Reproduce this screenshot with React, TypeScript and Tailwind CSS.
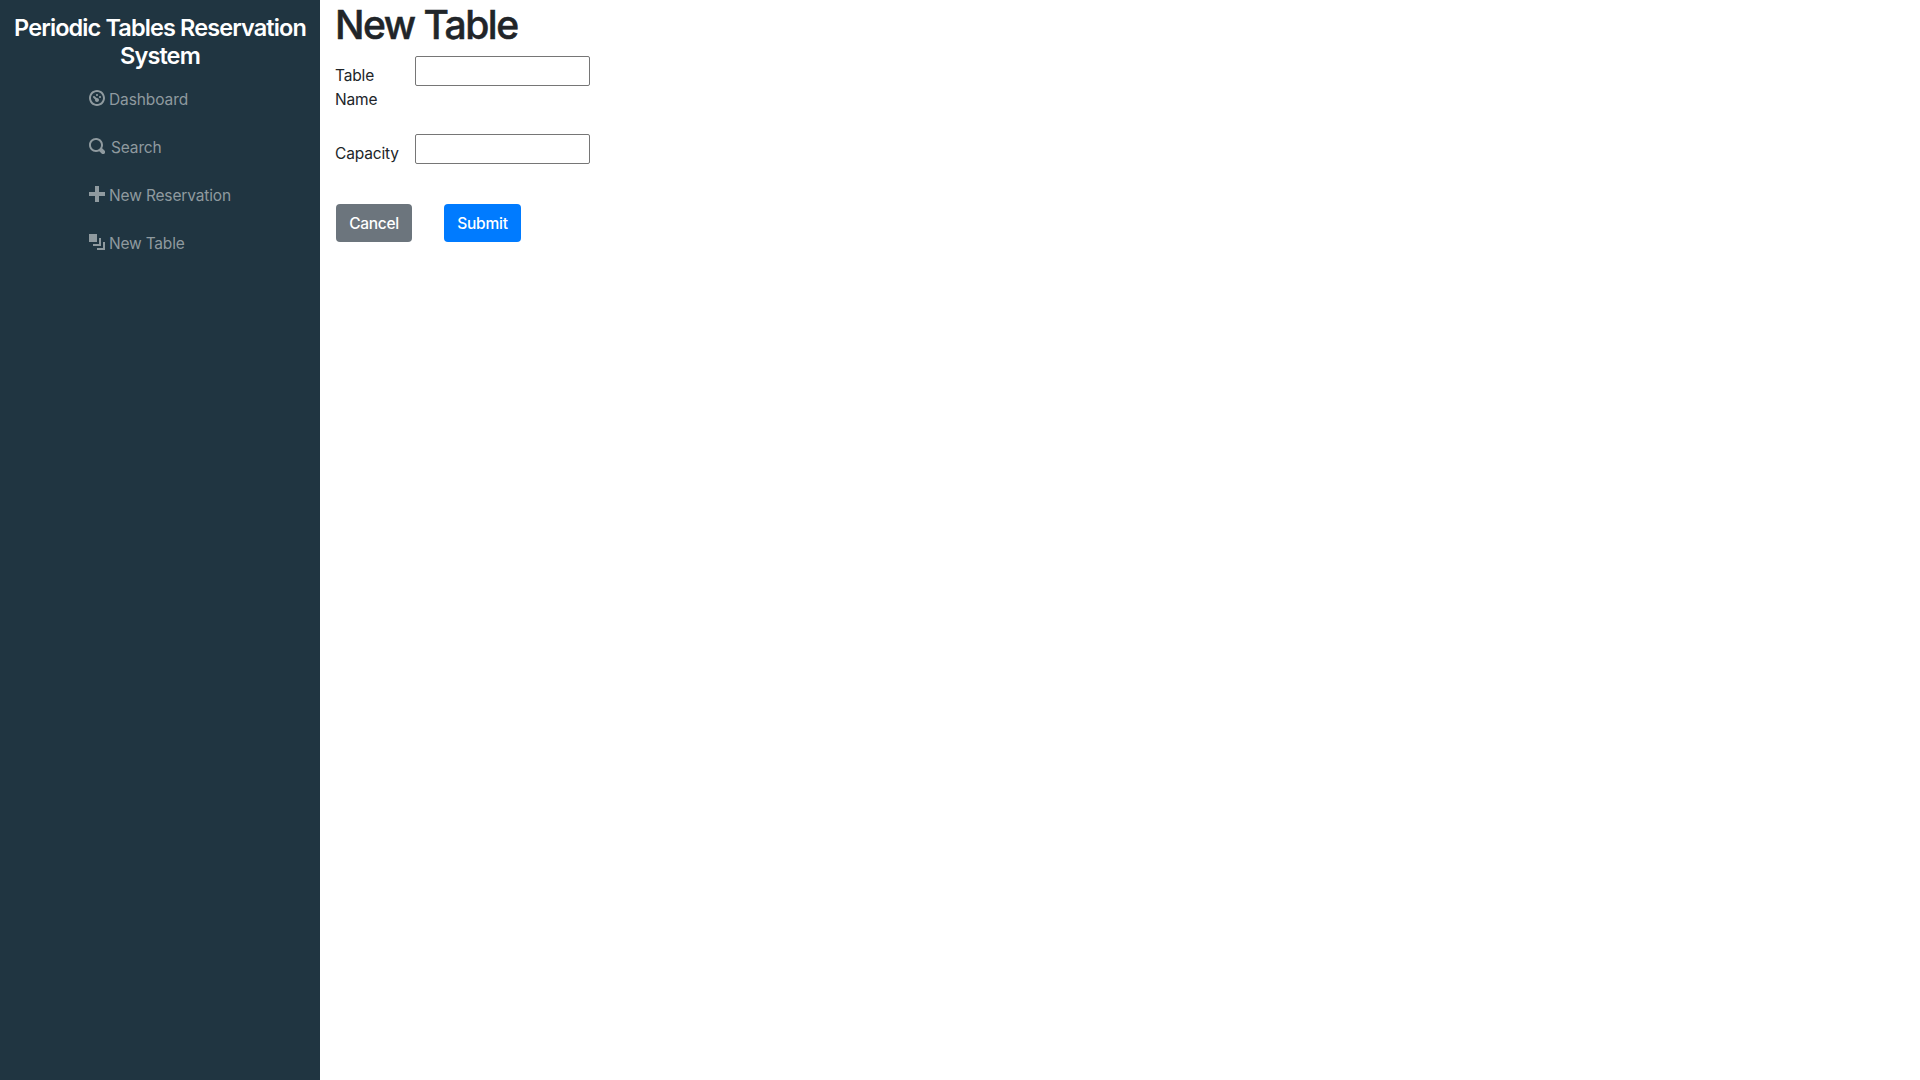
const icons = {
  dashboard:
    "M4 0c-2.2 0-4 1.8-4 4s1.8 4 4 4 4-1.8 4-4-1.8-4-4-4zm0 1c1.66 0 3 1.34 3 3s-1.34 3-3 3-3-1.34-3-3 1.34-3 3-3zm0 1c-.28 0-.5.22-.5.5s.22.5.5.5.5-.22.5-.5-.22-.5-.5-.5zm-1.66 1a.5.5 0 0 0-.19.84l.91.91c-.02.08-.06.16-.06.25 0 .55.45 1 1 1s1-.45 1-1-.45-1-1-1c-.09 0-.17.04-.25.06l-.91-.91a.5.5 0 0 0-.44-.16.5.5 0 0 0-.06 0zm3.16 0c-.28 0-.5.22-.5.5s.22.5.5.5.5-.22.5-.5-.22-.5-.5-.5z",
  search:
    "M3.5 0c-1.93 0-3.5 1.57-3.5 3.5s1.57 3.5 3.5 3.5c.59 0 1.17-.14 1.66-.41a1 1 0 0 0 .13.13l1 1a1.02 1.02 0 1 0 1.44-1.44l-1-1a1 1 0 0 0-.16-.13c.27-.49.44-1.06.44-1.66 0-1.93-1.55-3.5-3.5-3.5zm0 1c1.39 0 2.5 1.11 2.5 2.5 0 .66-.24 1.27-.66 1.72-.01.01-.02.02-.03.03a1 1 0 0 0-.13.13c-.44.4-1.04.63-1.69.63-1.39 0-2.5-1.11-2.5-2.5s1.11-2.5 2.5-2.5z",
  plus: "M3 0v3h-3v2h3v3h2v-3h3v-2h-3v-3h-2z",
  layers: "M0 0v4h4v-4h-4zm5 2v3h-3v1h4v-4h-1zm2 2v3h-3v1h4v-4h-1z",
};

type NavItemProps = { path: string; label: string; textClass: string };

function NavItem({ path, label, textClass }: NavItemProps) {
  return (
    <li>
      <a href="#" className="flex h-8 items-start text-[#8f9a9f]">
        <svg viewBox="0 0 8 8" className="size-4 fill-current">
          <path d={path} />
        </svg>
        <span className={textClass}>{label}</span>
      </a>
    </li>
  );
}

function Field({ label, id }: { label: string; id: string }) {
  return (
    <div className="flex items-start">
      <label htmlFor={id} className="-mb-px w-20 pt-2 pr-4 tracking-[-0.15px]">
        {label}
      </label>
      <input id={id} className="h-[30px] w-[175px] rounded-[2px] border border-[#767676] bg-white px-0.5" />
    </div>
  );
}

export default function App() {
  return (
    <div className="flex h-screen bg-white font-['Inter',sans-serif] text-[15.5px] leading-6 text-[#212529]">
      <nav className="w-80 shrink-0 bg-[#203541]">
        <h1 className="pt-[14px] text-center text-[23.5px] leading-7 font-semibold tracking-[-0.89px] text-white">
          Periodic Tables Reservation
          <br />
          System
        </h1>
        <ul className="mt-5 ml-[89px] flex flex-col gap-4">
          <NavItem path={icons.dashboard} label="Dashboard" textClass="ml-1 -mt-0.5 tracking-[-0.1px]" />
          <NavItem path={icons.search} label="Search" textClass="ml-1.5 -mt-0.5 tracking-[-0.15px]" />
          <NavItem path={icons.plus} label="New Reservation" textClass="ml-1 -mt-0.5 tracking-[-0.15px]" />
          <NavItem path={icons.layers} label="New Table" textClass="ml-1 -mt-0.5 tracking-[-0.2px]" />
        </ul>
      </nav>
      <main className="pl-[15px]">
        <h1 className="h-14 text-[39px] leading-[50px] font-medium tracking-[-1.5px] [-webkit-text-stroke:0.5px_#212529]">New Table</h1>
        <div className="flex flex-col gap-[23px]">
          <Field label="Table Name" id="table_name" />
          <Field label="Capacity" id="capacity" />
        </div>
        <div className="mt-[39px] ml-px flex gap-8 font-medium text-white">
          <button className="h-[38px] w-[76px] rounded bg-[#6c757d] pt-px tracking-[-0.3px]">Cancel</button>
          <button className="h-[38px] w-[77px] rounded bg-[#007bff] pt-px tracking-[-0.2px]">Submit</button>
        </div>
      </main>
    </div>
  );
}
